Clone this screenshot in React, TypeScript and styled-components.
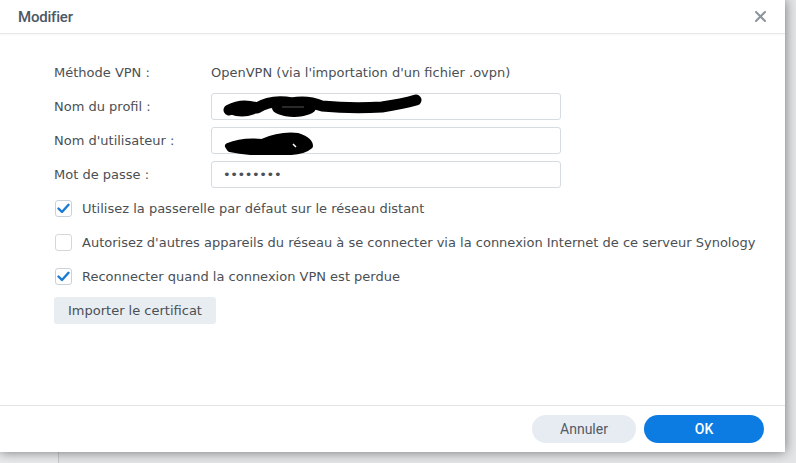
import React from 'react';
import styled, { createGlobalStyle } from 'styled-components';

const GlobalStyle = createGlobalStyle`
  html, body {
    margin: 0;
    padding: 0;
    background: #dedfe0;
    overflow: hidden;
  }
  body {
    font-family: "DejaVu Sans", Verdana, sans-serif;
  }
`;

const Desktop = styled.div`
  width: 796px;
  height: 463px;
  position: relative;
  overflow: hidden;
  background: linear-gradient(to right, #e9eaeb 0, #e9eaeb 58px, #c9cacb 58px, #c9cacb 59px, #e4e5e6 59px);
`;

const Dialog = styled.div`
  width: 785px;
  height: 452px;
  background: #fff;
  display: flex;
  flex-direction: column;
  box-shadow: 0 0 11px rgba(0, 0, 0, 0.5);
`;

const Header = styled.div`
  height: 33px;
  flex-shrink: 0;
  display: flex;
  align-items: center;
  justify-content: space-between;
  padding: 0 18px;
  border-bottom: 1px solid #e3e5e7;
  box-shadow: 0 2px 2px rgba(0, 0, 0, 0.02);
`;

const Title = styled.div`
  font-family: Roboto, "Noto Sans", sans-serif;
  font-weight: 500;
  font-size: 15px;
  color: #4d5864;
  letter-spacing: -0.2px;
`;

const CloseButton = styled.button`
  background: none;
  border: none;
  padding: 0;
  margin-right: 1px;
  width: 12px;
  height: 12px;
  display: flex;
  align-items: center;
  justify-content: center;
  cursor: pointer;
`;

const Body = styled.div`
  flex: 1;
  padding: 25px 20px 0 54px;
  display: flex;
  flex-direction: column;
  gap: 7px;
`;

const Row = styled.div`
  height: 27px;
  display: flex;
  align-items: center;
  font-size: 13px;
  color: #4b4f54;
`;

const Label = styled.div`
  width: 157px;
  flex-shrink: 0;
`;

const Value = styled.div`
  color: #4b4f54;
`;

const Field = styled.div`
  width: 350px;
  height: 27px;
  box-sizing: border-box;
  border: 1px solid #d6dbe0;
  border-radius: 3px;
  display: flex;
  align-items: center;
  padding-left: 11px;
  position: relative;
`;

const Dots = styled.span`
  font-size: 13px;
  color: #4a5159;
  letter-spacing: -0.4px;
`;

const Redaction = styled.svg`
  position: absolute;
  left: 0;
  top: 0;
`;

const CheckRow = styled.label`
  height: 27px;
  display: flex;
  align-items: center;
  gap: 10px;
  font-size: 13px;
  color: #4b4f54;
  white-space: nowrap;
`;

const Box = styled.span<{ $checked: boolean }>`
  width: 17px;
  height: 17px;
  flex-shrink: 0;
  box-sizing: border-box;
  border: 1px solid ${p => (p.$checked ? '#c9d1d9' : '#d3d8dd')};
  border-radius: 3px;
  background: #fff;
  display: flex;
  align-items: center;
  justify-content: center;
  margin-left: 1px;
`;

const GreyButton = styled.button`
  align-self: flex-start;
  height: 27px;
  padding: 0 14px;
  border: none;
  border-radius: 3px;
  background: #e8edf2;
  font-family: "DejaVu Sans", Verdana, sans-serif;
  font-size: 13px;
  color: #4b4f54;
  cursor: pointer;
`;

const Footer = styled.div`
  height: 46px;
  flex-shrink: 0;
  border-top: 1px solid #e3e5e7;
  display: flex;
  align-items: center;
  justify-content: flex-end;
  gap: 8px;
  padding: 0 21px 0 0;
`;

const PillButton = styled.button<{ $primary?: boolean }>`
  height: 28px;
  width: ${p => (p.$primary ? '120px' : '104px')};
  border: none;
  border-radius: 14px;
  background: ${p => (p.$primary ? '#0c7ce2' : '#e6ecf2')};
  color: ${p => (p.$primary ? '#fff' : '#515b66')};
  font-family: Roboto, "Noto Sans", sans-serif;
  font-size: 14px;
  font-weight: ${p => (p.$primary ? 500 : 400)};
  cursor: pointer;
`;

const Check = () => (
  <svg width="13" height="11" viewBox="0 0 13 11">
    <path d="M1.5 5.5 L5 9 L11.5 1.8" fill="none" stroke="#1b7bd4" strokeWidth="2.4" strokeLinecap="round" strokeLinejoin="round" />
  </svg>
);

const CheckOption: React.FC<{ checked: boolean; children: React.ReactNode }> = ({ checked, children }) => (
  <CheckRow>
    <Box $checked={checked}>{checked && <Check />}</Box>
    {children}
  </CheckRow>
);

export default function App() {
  return (
    <Desktop>
      <GlobalStyle />
      <Dialog>
        <Header>
          <Title>Modifier</Title>
          <CloseButton>
            <svg width="11" height="11" viewBox="0 0 11 11">
              <path d="M1 1 L10 10 M10 1 L1 10" stroke="#8c939a" strokeWidth="2" strokeLinecap="round" />
            </svg>
          </CloseButton>
        </Header>
        <Body>
          <Row>
            <Label>Méthode VPN :</Label>
            <Value>OpenVPN (via l'importation d'un fichier .ovpn)</Value>
          </Row>
          <Row>
            <Label>Nom du profil :</Label>
            <Field>
              <Redaction width="350" height="27" viewBox="0 0 350 27">
                <path d="M17 16 Q 30 9 45 14 Q 60 5 80 9 Q 95 6 110 12 Q 140 15 170 13 Q 190 10 204 6" fill="none" stroke="#000" strokeWidth="11" strokeLinecap="round" strokeLinejoin="round" />
                <ellipse cx="82" cy="14" rx="22" ry="9" fill="#000" />
                <ellipse cx="30" cy="16" rx="16" ry="6.5" fill="#000" />
                <path d="M70 13 L92 13" stroke="#555" strokeWidth="1" />
              </Redaction>
            </Field>
          </Row>
          <Row>
            <Label>Nom d'utilisateur :</Label>
            <Field>
              <Redaction width="350" height="27" viewBox="0 0 350 27">
                <path d="M16 18 Q 30 12 50 14 Q 68 6 86 8 Q 98 12 98 18 Q 90 25 70 24 Q 40 26 18 21 Z" fill="#000" stroke="#000" strokeWidth="6" strokeLinejoin="round" />
                <path d="M81 16 L84 19" stroke="#fff" strokeWidth="1.5" />
              </Redaction>
            </Field>
          </Row>
          <Row>
            <Label>Mot de passe :</Label>
            <Field>
              <Dots>••••••••</Dots>
            </Field>
          </Row>
          <CheckOption checked>Utilisez la passerelle par défaut sur le réseau distant</CheckOption>
          <CheckOption checked={false}>
            Autorisez d'autres appareils du réseau à se connecter via la connexion Internet de ce serveur Synology
          </CheckOption>
          <CheckOption checked>Reconnecter quand la connexion VPN est perdue</CheckOption>
          <GreyButton>Importer le certificat</GreyButton>
        </Body>
        <Footer>
          <PillButton>Annuler</PillButton>
          <PillButton $primary>OK</PillButton>
        </Footer>
      </Dialog>
    </Desktop>
  );
}
